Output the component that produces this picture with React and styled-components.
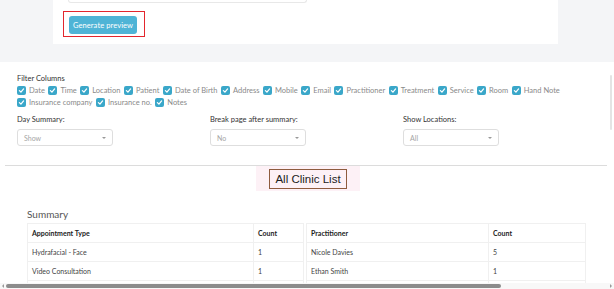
import React from 'react';
import styled, { createGlobalStyle } from 'styled-components';

const GlobalStyle = createGlobalStyle`
  html, body {
    margin: 0;
    padding: 0;
    overflow: hidden;
  }
  body {
    font-family: Lato, "Liberation Sans", sans-serif;
    color: #444;
    background: #fff;
  }
`;

const Page = styled.div`
  width: 614px;
  height: 289px;
  display: flex;
  flex-direction: column;
  overflow: hidden;
`;

const TopBand = styled.div`
  flex: none;
  height: 62px;
  background: #f4f5f7;
  padding-left: 53px;
  box-sizing: border-box;
`;

const Card = styled.div`
  width: 505px;
  height: 44px;
  background: #fff;
  padding-left: 10px;
  box-sizing: border-box;
`;

const FieldTail = styled.div`
  width: 237px;
  height: 2px;
  margin-left: 5px;
  border: 1px solid #e8e8e8;
  border-top: none;
  border-radius: 0 0 3px 3px;
`;

const Highlight = styled.div`
  display: inline-flex;
  margin-top: 8px;
  padding: 4px 7px 2px 5px;
  border: 1.5px solid #e3262d;
`;

const PrimaryButton = styled.button`
  width: 68px;
  height: 18px;
  padding: 0;
  border: none;
  border-radius: 3px;
  background: #4fb4d6;
  color: #fff;
  font-family: Lato, "Liberation Sans", sans-serif;
  font-size: 7.5px;
  font-weight: 400;
  letter-spacing: 0.1px;
`;

const Body = styled.div`
  flex: 1;
  min-height: 0;
  display: flex;
`;

const Content = styled.div`
  flex: 1;
  min-width: 0;
  overflow: hidden;
`;

const VTrack = styled.div`
  flex: none;
  width: 6px;
  display: flex;
  justify-content: center;
  padding-top: 13px;
  box-sizing: border-box;
`;

const VThumb = styled.div`
  width: 2px;
  height: 55px;
  border-radius: 1px;
  background: #e4e4e4;
`;

const HTrack = styled.div`
  flex: none;
  height: 6px;
  display: flex;
  align-items: center;
  gap: 1px;
  padding: 0 2px;
  background: #f8f8f8;
`;

const Arrow = styled.span`
  width: 0;
  height: 0;
  border-top: 2px solid transparent;
  border-bottom: 2px solid transparent;
  ${p => (p.$dir === 'left' ? 'border-right: 2px solid #9a9a9a;' : 'border-left: 2px solid #9a9a9a;')}
`;

const HLane = styled.div`
  flex: 1;
  display: flex;
  padding: 0 1px;
`;

const HThumb = styled.div`
  width: 495px;
  height: 4px;
  border-radius: 2px;
  background: #8c8c8c;
`;

const Inner = styled.div`
  width: 740px;
  padding-top: 12px;
  box-sizing: border-box;
`;

const Section = styled.div`
  padding-left: 17px;
`;

const FilterTitle = styled.div`
  font-size: 7.5px;
  line-height: 10px;
  color: #333;
`;

const CheckList = styled.div`
  width: 560px;
  display: flex;
  flex-wrap: wrap;
  column-gap: 3.5px;
`;

const CheckItem = styled.label`
  display: flex;
  align-items: center;
  gap: 3px;
  height: 12px;
  font-size: 7.5px;
  color: #8a8a8a;
`;

const Box = styled.span`
  width: 9px;
  height: 9px;
  border-radius: 2px;
  background: #3aa7c9;
  display: flex;
  align-items: center;
  justify-content: center;
`;

const OptionsGrid = styled.div`
  display: grid;
  grid-template-columns: repeat(3, 193px);
  margin-top: 7px;
`;

const FieldLabel = styled.div`
  font-size: 7.5px;
  line-height: 10px;
  color: #333;
  margin-bottom: 4px;
`;

const Select = styled.div`
  width: 96px;
  height: 17px;
  border: 1px solid #dedede;
  border-radius: 3px;
  box-sizing: border-box;
  display: flex;
  align-items: center;
  justify-content: space-between;
  padding: 0 6px;
  font-size: 7px;
  color: #a5a5a5;
`;

const Caret = styled.span`
  width: 0;
  height: 0;
  border-left: 2px solid transparent;
  border-right: 2px solid transparent;
  border-top: 2px solid #999;
`;

const Divider = styled.hr`
  width: 602px;
  margin: 19px 0 0 5px;
  border: none;
  border-top: 1px solid #dcdcdc;
`;

const TitleRow = styled.div`
  width: 606px;
  margin-left: 5px;
  display: flex;
  justify-content: center;
`;

const TitleBand = styled.div`
  background: #fdf1f6;
  padding: 3px 13px 2px;
`;

const TitleBox = styled.div`
  width: 78px;
  height: 20px;
  box-sizing: border-box;
  border: 1px solid #8e5b3e;
  display: flex;
  align-items: center;
  justify-content: center;
  font-family: "Liberation Sans", Arial, sans-serif;
  font-size: 11.5px;
  color: #222;
`;

const SummaryTitle = styled.div`
  margin: 16px 0 2px 27px;
  font-size: 10px;
  line-height: 14px;
  color: #555;
`;

const Tables = styled.div`
  display: flex;
  gap: 2px;
  margin-left: 27px;
`;

const Table = styled.table`
  width: ${p => p.$width}px;
  border-collapse: collapse;
  table-layout: fixed;
  font-size: 7px;
  color: #444;
`;

const Th = styled.th`
  height: 18px;
  padding: 0 0 0 4px;
  border: 1px solid #f0f0f0;
  text-align: left;
  font-weight: 700;
  color: #222;
`;

const Td = styled.td`
  height: 18px;
  padding: 0 0 0 4px;
  border: 1px solid #f0f0f0;
`;

const columns = [
  'Date', 'Time', 'Location', 'Patient', 'Date of Birth', 'Address', 'Mobile',
  'Email', 'Practitioner', 'Treatment', 'Service', 'Room', 'Hand Note',
  'Insurance company', 'Insurance no.', 'Notes',
];

const options = [
  { label: 'Day Summary:', value: 'Show' },
  { label: 'Break page after summary:', value: 'No' },
  { label: 'Show Locations:', value: 'All' },
];

const types = [
  ['Hydrafacial - Face', '1'],
  ['Video Consultation', '1'],
  ['', ''],
];

const practitioners = [
  ['Nicole Davies', '5'],
  ['Ethan Smith', '1'],
  ['', ''],
];

const Check = () => (
  <Box>
    <svg width="7" height="7" viewBox="0 0 10 10">
      <path d="M2 5.2 L4.2 7.3 L8 2.8" fill="none" stroke="#fff" strokeWidth="1.8" strokeLinecap="round" strokeLinejoin="round" />
    </svg>
  </Box>
);

const SummaryTable = ({ width, first, head, rows }) => (
  <Table $width={width}>
    <colgroup>
      <col style={{ width: first }} />
      <col />
    </colgroup>
    <thead>
      <tr>
        <Th>{head}</Th>
        <Th>Count</Th>
      </tr>
    </thead>
    <tbody>
      {rows.map((r, i) => (
        <tr key={i}>
          <Td>{r[0]}</Td>
          <Td>{r[1]}</Td>
        </tr>
      ))}
    </tbody>
  </Table>
);

const App = () => {
  return (
    <Page>
      <GlobalStyle />
      <TopBand>
        <Card>
          <FieldTail />
          <Highlight>
            <PrimaryButton>Generate preview</PrimaryButton>
          </Highlight>
        </Card>
      </TopBand>
      <Body>
        <Content>
          <Inner>
            <Section>
              <FilterTitle>Filter Columns</FilterTitle>
              <CheckList>
                {columns.map(c => (
                  <CheckItem key={c}>
                    <Check />
                    {c}
                  </CheckItem>
                ))}
              </CheckList>
              <OptionsGrid>
                {options.map(o => (
                  <div key={o.label}>
                    <FieldLabel>{o.label}</FieldLabel>
                    <Select>
                      {o.value}
                      <Caret />
                    </Select>
                  </div>
                ))}
              </OptionsGrid>
            </Section>
            <Divider />
            <TitleRow>
              <TitleBand>
                <TitleBox>All Clinic List</TitleBox>
              </TitleBand>
            </TitleRow>
            <SummaryTitle>Summary</SummaryTitle>
            <Tables>
              <SummaryTable width={277} first="226px" head="Appointment Type" rows={types} />
              <SummaryTable width={280} first="182px" head="Practitioner" rows={practitioners} />
            </Tables>
          </Inner>
        </Content>
        <VTrack>
          <VThumb />
        </VTrack>
      </Body>
      <HTrack>
        <Arrow $dir="left" />
        <HLane>
          <HThumb />
        </HLane>
        <Arrow $dir="right" />
      </HTrack>
    </Page>
  );
};

export default App;
